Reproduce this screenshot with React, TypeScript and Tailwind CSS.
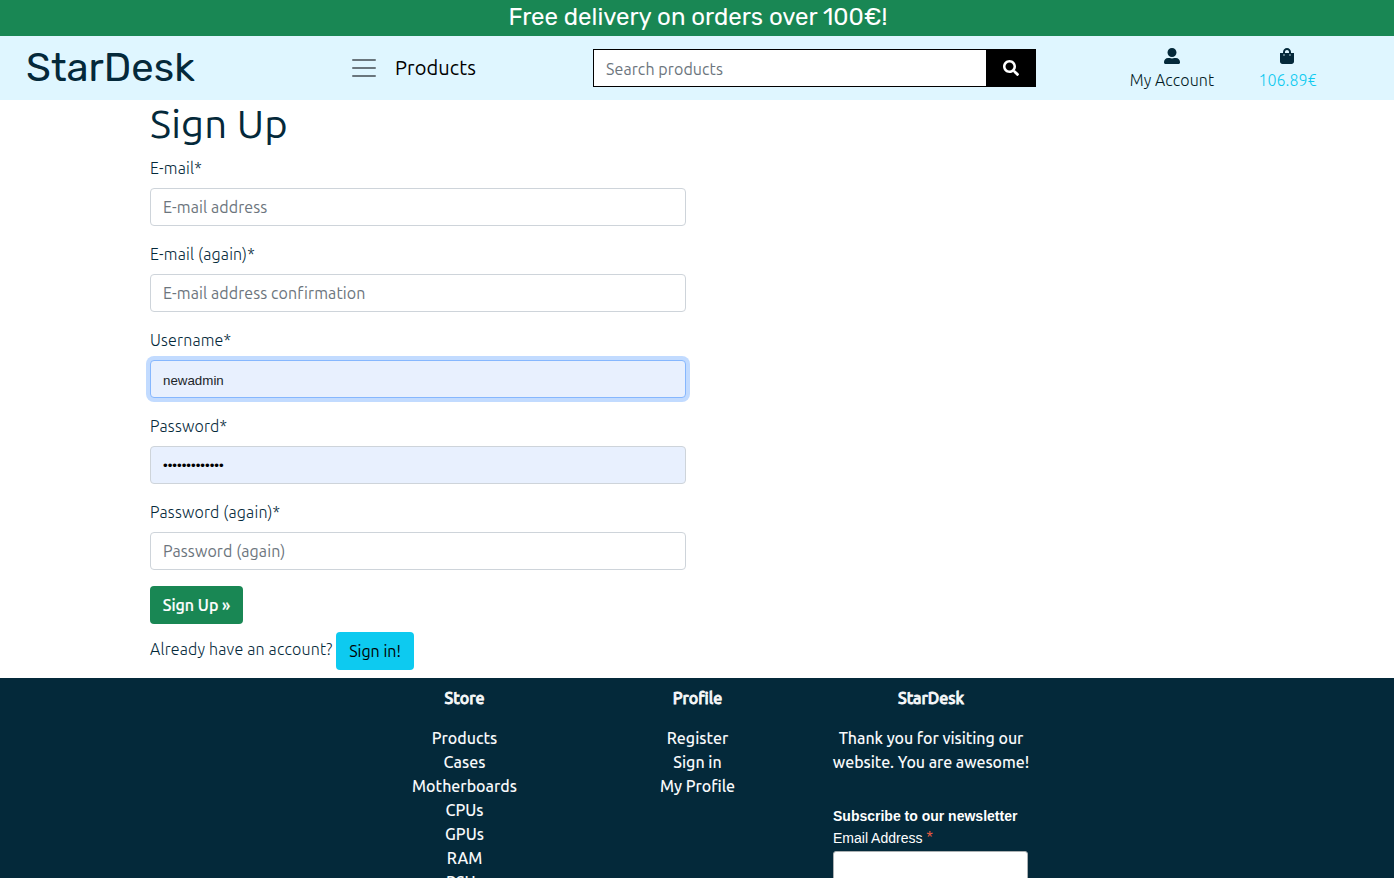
import React from "react";
import { FaSearch, FaUserAlt, FaShoppingBag } from "react-icons/fa";

type FieldProps = {
  label: string;
  placeholder?: string;
  value?: string;
  type?: string;
  state?: "empty" | "filled" | "focused";
};

const stateClass = {
  empty: "border-[#ced4da] bg-white text-base font-normal tracking-[0.09px]",
  filled: "border-[#ced4da] bg-[#e8f0fe] font-['Liberation_Sans',sans-serif] text-[13.333px] text-black pt-px",
  focused:
    "border-[#86b7fe] bg-[#e8f0fe] font-['Liberation_Sans',sans-serif] text-[13.333px] text-[#212529] ring-4 ring-[#c2dbff] pt-0.5",
};

function Field({ label, placeholder, value, type = "text", state = "empty" }: FieldProps) {
  return (
    <label className="mb-4 block">
      <span className="mb-2 block leading-6 tracking-[0.2px]">{label}</span>
      <input
        type={type}
        placeholder={placeholder}
        defaultValue={value}
        className={`block h-[38px] w-full rounded-[4px] border px-3 outline-none placeholder:text-[#6c757d] ${stateClass[state]}`}
      />
    </label>
  );
}

const storeLinks = ["Products", "Cases", "Motherboards", "CPUs", "GPUs", "RAM", "PSUs"];
const profileLinks = ["Register", "Sign in", "My Profile"];

function FooterHeading({ children }: { children: React.ReactNode }) {
  return <h6 className="mb-4 font-medium leading-6 [-webkit-text-stroke:0.8px_#f8f9fa]">{children}</h6>;
}

function LinkColumn({ title, links }: { title: string; links: string[] }) {
  return (
    <div className="w-[233px] text-center">
      <FooterHeading>{title}</FooterHeading>
      {links.map((link) => (
        <a key={link} className="block leading-6">
          {link}
        </a>
      ))}
    </div>
  );
}

export default function App() {
  return (
    <div className="flex h-[878px] flex-col overflow-hidden bg-white font-['Ubuntu','Noto_Sans',sans-serif] text-base font-light text-[#04293a]">
      <div className="h-9 shrink-0 bg-[#198754] text-center font-['Rubik','Roboto',sans-serif] text-2xl font-normal leading-[34px] text-white">
        <span className="pl-[2px]">Free delivery on orders over 100€!</span>
      </div>

      <header className="flex h-16 shrink-0 items-center bg-[#dff6ff]">
        <div className="w-[352px] pl-[26px] font-['Rubik','Roboto',sans-serif] text-[40px] font-normal leading-none">StarDesk</div>
        <div className="flex w-[241px] items-center gap-[19px]">
          <svg viewBox="0 0 24 20" className="h-5 w-6" stroke="#6a767d" strokeWidth="2" strokeLinecap="round">
            <path d="M1 2h22M1 10h22M1 18h22" />
          </svg>
          <span className="text-xl font-normal tracking-[0.1px] text-black">Products</span>
        </div>
        <form className="flex h-[38px] w-[443px] border border-black">
          <input
            placeholder="Search products"
            className="min-w-0 flex-1 bg-white px-3 pt-px font-normal tracking-[0.09px] outline-none placeholder:text-[#6c757d]"
          />
          <button type="button" className="flex w-[49px] items-center justify-center bg-black text-white">
            <FaSearch />
          </button>
        </form>
        <a className="ml-[78px] flex w-[116px] flex-col items-center pt-[3px]">
          <FaUserAlt />
          <span className="mt-1 leading-6 tracking-[0.12px] text-[#021a25]">My Account</span>
        </a>
        <a className="flex w-[115px] flex-col items-center pt-[3px]">
          <FaShoppingBag className="mr-px" />
          <span className="mt-1 leading-6 text-[#0dcaf0]">106.89€</span>
        </a>
      </header>

      <main className="h-[578px] shrink-0 pl-[150px]">
        <div className="w-[536px]">
          <h1 className="mb-2 text-[40px] font-normal leading-[48px] tracking-[0.2px]">Sign Up</h1>
          <Field label="E-mail*" placeholder="E-mail address" />
          <Field label="E-mail (again)*" placeholder="E-mail address confirmation" />
          <Field label="Username*" value="newadmin" state="focused" />
          <Field label="Password*" type="password" value="abcdefghijklm" state="filled" />
          <Field label="Password (again)*" placeholder="Password (again)" />
          <button
            type="button"
            className="block h-[38px] w-[93px] rounded-[4px] bg-[#198754] font-medium text-white [-webkit-text-stroke:0.2px_#fff]"
          >
            Sign Up »
          </button>
          <p className="mt-2 flex">
            <span className="w-[186px] pt-[5px] leading-6 tracking-[0.19px]">Already have an account?</span>
            <a className="flex h-[38px] w-[78px] items-center justify-center rounded-[4px] bg-[#0dcaf0] font-normal text-black">Sign in!</a>
          </p>
        </div>
      </main>

      <footer className="flex flex-1 bg-[#04293a] pl-[348px] pt-2 font-medium text-[#f8f9fa]">
        <LinkColumn title="Store" links={storeLinks} />
        <LinkColumn title="Profile" links={profileLinks} />
        <div className="w-[234px] text-center">
          <FooterHeading>StarDesk</FooterHeading>
          <p className="leading-6 tracking-[-0.05px]">
            Thank you for visiting our
            <br />
            website. You are awesome!
          </p>
          <div className="mt-[34px] pl-[19px] text-left font-['Liberation_Sans',sans-serif] text-sm font-normal">
            <h2 className="font-bold leading-4 text-white">Subscribe to our newsletter</h2>
            <p className="mt-1.5 leading-4 text-white">
              Email Address <span className="text-base leading-none text-[#e85c41]">*</span>
            </p>
            <input className="mt-[5px] block h-9 w-[195px] rounded-[3px] border border-[#abb0b2] bg-white" />
          </div>
        </div>
      </footer>
    </div>
  );
}
